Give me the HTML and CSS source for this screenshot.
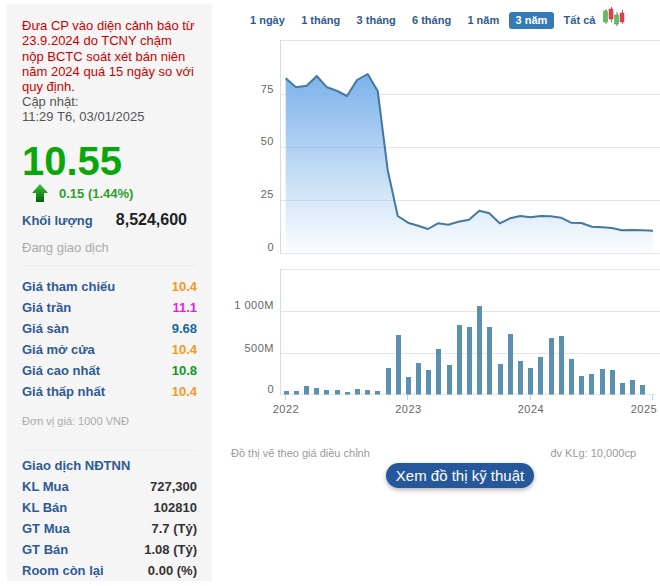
FILE: index.html
```html
<!DOCTYPE html>
<html lang="vi">
<head>
<meta charset="utf-8">
<title>Biểu đồ giá</title>
<link rel="stylesheet" href="styles.css">
</head>
<body>
<div class="page">
  <aside class="side">
    <div class="notice">Đưa CP vào diện cảnh báo từ 23.9.2024 do TCNY chậm nộp BCTC soát xét bán niên năm 2024 quá 15 ngày so với quy định.</div>
    <div class="updated">Cập nhật:<br>11:29 T6, 03/01/2025</div>
    <div class="price">10.55</div>
    <div class="change">
      <svg class="arrow" width="16" height="18" viewBox="0 0 16 18"><defs><linearGradient id="ag" x1="0" y1="0" x2="0" y2="1"><stop offset="0" stop-color="#3fc23f"/><stop offset="1" stop-color="#006400"/></linearGradient></defs><path d="M8 0 L16 9 L12 9 L12 18 L4 18 L4 9 L0 9 Z" fill="url(#ag)"/></svg>
      <span>0.15 (1.44%)</span>
    </div>
    <div class="volume"><span class="label">Khối lượng</span><span class="volume-value">8,524,600</span></div>
    <div class="status">Đang giao dịch</div>
    <div class="rows first-rows">
      <div class="row"><span class="label">Giá tham chiếu</span><span class="orange">10.4</span></div>
      <div class="row"><span class="label">Giá trần</span><span class="magenta">11.1</span></div>
      <div class="row"><span class="label">Giá sàn</span><span class="teal">9.68</span></div>
      <div class="row"><span class="label">Giá mở cửa</span><span class="orange">10.4</span></div>
      <div class="row"><span class="label">Giá cao nhất</span><span class="green">10.8</span></div>
      <div class="row"><span class="label">Giá thấp nhất</span><span class="orange">10.4</span></div>
    </div>
    <div class="unit">Đơn vị giá: 1000 VNĐ</div>
    <div class="rows second-rows">
      <div class="row"><span class="label">Giao dịch NĐTNN</span></div>
      <div class="row"><span class="label">KL Mua</span><span class="dark">727,300</span></div>
      <div class="row"><span class="label">KL Bán</span><span class="dark">102810</span></div>
      <div class="row"><span class="label">GT Mua</span><span class="dark">7.7 (Tỷ)</span></div>
      <div class="row"><span class="label">GT Bán</span><span class="dark">1.08 (Tỷ)</span></div>
      <div class="row"><span class="label">Room còn lại</span><span class="dark">0.00 (%)</span></div>
    </div>
  </aside>
  <main class="main">
    <nav class="tabs">
      <span class="tab">1 ngày</span>
      <span class="tab">1 tháng</span>
      <span class="tab">3 tháng</span>
      <span class="tab">6 tháng</span>
      <span class="tab">1 năm</span>
      <span class="tab active">3 năm</span>
      <span class="tab">Tất cả</span>
      <svg class="candles" width="24" height="20" viewBox="0 0 24 20">
        <g class="wick"><path d="M4 2V17M9.500 0V15M15 5V19M20.500 3V17"/></g>
        <rect class="up" x="1.500" y="4" width="4" height="11"/>
        <rect class="down" x="7" y="2" width="4" height="10"/>
        <rect class="up" x="12.500" y="8" width="4" height="9"/>
        <rect class="down" x="18" y="6" width="4" height="9"/>
      </svg>
    </nav>
    <svg class="chart" width="440" height="384" viewBox="220 32 440 384">
      <defs><linearGradient id="area" x1="0" y1="0" x2="0" y2="1"><stop offset="0" stop-color="#7cb2ea"/><stop offset="1" stop-color="#7cb2ea" stop-opacity="0.02"/></linearGradient></defs>
      <path class="grid" d="M280 40.500H660M280 94.500H660M280 147.500H660M280 200.500H660M280 253.500H660"/>
      <path class="axis" d="M280.500 40V254"/>
      <path class="area" d="M285.700 78.300L296 87.300L306.700 85.700L316.700 76L327 87.300L337.300 91L347 96L357 80L367.700 74L377.700 91L387.700 170L397.700 216L408 222.700L418 225.700L428 229L438 223.300L448.300 224.700L458.300 221.700L469 219.700L479.300 210.700L489.300 213.300L499.700 223.300L510 218.300L520.300 216L530.300 217.300L540.700 216L550.700 216.300L561 217.700L571 222.700L581.300 223L592 226.700L602 227.300L612 228L621.700 230.300L632.300 230L642.700 230.300L653 230.700V253H285.700Z"/>
      <path class="line" d="M285.700 78.300L296 87.300L306.700 85.700L316.700 76L327 87.300L337.300 91L347 96L357 80L367.700 74L377.700 91L387.700 170L397.700 216L408 222.700L418 225.700L428 229L438 223.300L448.300 224.700L458.300 221.700L469 219.700L479.300 210.700L489.300 213.300L499.700 223.300L510 218.300L520.300 216L530.300 217.300L540.700 216L550.700 216.300L561 217.700L571 222.700L581.300 223L592 226.700L602 227.300L612 228L621.700 230.300L632.300 230L642.700 230.300L653 230.700"/>
      <g class="tick-text ylabels">
        <text x="274" y="93">75</text><text x="274" y="145">50</text><text x="274" y="198">25</text><text x="274" y="251">0</text>
        <text x="274" y="309">1 000M</text><text x="274" y="352">500M</text><text x="274" y="393">0</text>
      </g>
      <path class="grid" d="M280 269.500H660M280 311.500H660M280 353.500H660M280 394.500H656"/>
      <path class="axis" d="M280.500 269V395"/>
      <path class="ticks" d="M285.500 395V400M407.500 395V400M530.500 395V400M652.500 395V400"/>
      <g class="bars">
        <rect x="284" y="391" width="5" height="3.500"/><rect x="294" y="391" width="5" height="3.500"/><rect x="304" y="386" width="5" height="8.500"/><rect x="314" y="388" width="5" height="6.500"/><rect x="324" y="390" width="5" height="4.500"/><rect x="335" y="390" width="5" height="4.500"/><rect x="345" y="392" width="5" height="2.500"/><rect x="355" y="389" width="5" height="5.500"/><rect x="365" y="390" width="5" height="4.500"/><rect x="375" y="391" width="5" height="3.500"/><rect x="386" y="368" width="5" height="26.500"/><rect x="396" y="335" width="5" height="59.500"/><rect x="406" y="377" width="5" height="17.500"/><rect x="416" y="363" width="5" height="31.500"/><rect x="426" y="370" width="5" height="24.500"/><rect x="436" y="349" width="5" height="45.500"/><rect x="447" y="365" width="5" height="29.500"/><rect x="457" y="325" width="5" height="69.500"/><rect x="467" y="327" width="5" height="67.500"/><rect x="477" y="306" width="5" height="88.500"/><rect x="487" y="327" width="5" height="67.500"/><rect x="498" y="364" width="5" height="30.500"/><rect x="508" y="334" width="5" height="60.500"/><rect x="518" y="361" width="5" height="33.500"/><rect x="528" y="368" width="5" height="26.500"/><rect x="538" y="357" width="5" height="37.500"/><rect x="549" y="338" width="5" height="56.500"/><rect x="559" y="336" width="5" height="58.500"/><rect x="569" y="359" width="5" height="35.500"/><rect x="579" y="376" width="5" height="18.500"/><rect x="589" y="374" width="5" height="20.500"/><rect x="600" y="369" width="5" height="25.500"/><rect x="610" y="370" width="5" height="24.500"/><rect x="620" y="383" width="5" height="11.500"/><rect x="630" y="380" width="5" height="14.500"/><rect x="640" y="385" width="5" height="9.500"/>
      </g>
      <g class="tick-text xlabels">
        <text x="286" y="413">2022</text><text x="408.500" y="413">2023</text><text x="531" y="413">2024</text><text x="644" y="413">2025</text>
      </g>
    </svg>
    <div class="notes"><span>Đồ thị vẽ theo giá điều chỉnh</span><span>đv KLg: 10,000cp</span></div>
    <div class="action"><a class="button">Xem đồ thị kỹ thuật</a></div>
  </main>
</div>
</body>
</html>
```
FILE: styles.css
```css
html, body { margin: 0; padding: 0; background: #fff; }
body { font-family: "Liberation Sans", Arial, sans-serif; overflow: hidden; }
.page { display: flex; align-items: flex-start; width: 660px; height: 586px; }

.side { box-sizing: border-box; width: 205px; height: 577px; margin: 4px 0 0 7px; padding: 14px 15px 0; background: #f5f5f5; overflow: hidden; }
.notice { font-size: 13px; line-height: 15.3px; color: #c00; }
.updated { font-size: 13px; line-height: 15px; color: #555; }
.price { margin-top: 13.600px; font-size: 40px; line-height: 46px; font-weight: bold; color: #09a709; }
.change { display: flex; align-items: center; gap: 11px; height: 22px; margin: -2px 0 0 10px; font-size: 13px; font-weight: bold; color: #2f9e2f; }
.arrow { display: block; }
.volume { display: flex; justify-content: space-between; align-items: baseline; margin-top: 7px; padding-right: 10px; height: 24px; }
.label { font-size: 13px; font-weight: bold; color: #2f5a94; }
.volume-value { font-size: 16px; font-weight: bold; color: #222; }
.status { margin-top: 4px; padding-bottom: 8px; font-size: 13px; line-height: 18px; color: #aaa; border-bottom: 1px solid #ececec; }
.rows { font-size: 13px; font-weight: bold; }
.first-rows { margin-top: 10px; }
.row { display: flex; justify-content: space-between; align-items: center; height: 21px; }
.orange { color: #f7981d; }
.magenta { color: #e31fe3; }
.teal { color: #17699c; }
.green { color: #0c9a1c; }
.dark { color: #333; }
.unit { margin-top: 11px; padding-bottom: 21px; font-size: 11px; line-height: 16px; color: #aaa; border-bottom: 1px solid #ececec; }
.second-rows { margin-top: 4px; }

.main { flex: 1; min-width: 0; margin-left: 8px; }
.tabs { display: flex; align-items: center; gap: 2.300px; height: 17px; margin: 12px 0 0 23px; }
.tab { padding: 0 7px; font-size: 11px; line-height: 17px; font-weight: bold; color: #2f5a8f; border-radius: 3px; white-space: nowrap; }
.tab.active { background: #337ab7; color: #fff; }
.candles { display: block; margin: -8px 0 0 -3px; }
.wick path { stroke: #777; stroke-width: 1; fill: none; }
.up { fill: #5cc05c; stroke: #3e9a3e; stroke-width: .5; }
.down { fill: #e04050; stroke: #b73040; stroke-width: .5; }

.chart { display: block; margin-top: 3px; }
.grid { stroke: #e2e6ec; stroke-width: 1; fill: none; }
.axis { stroke: #d4dce6; stroke-width: 1; fill: none; }
.ticks { stroke: #c0d0e0; stroke-width: 1; fill: none; }
.area { fill: url(#area); }
.line { stroke: #44799f; stroke-width: 2; fill: none; stroke-linejoin: round; }
.bars rect { fill: #5a91b0; }
.tick-text text { font-family: "Liberation Sans", Arial, sans-serif; font-size: 11px; letter-spacing: .5px; fill: #666; }
.ylabels text { text-anchor: end; }
.xlabels text { text-anchor: middle; }

.notes { display: flex; justify-content: space-between; margin: 30px 24px 0 11px; font-size: 11px; line-height: 14px; color: #999; }
.action { display: flex; justify-content: center; margin: 3px 0 0 40px; }
.button { display: block; width: 148px; height: 25px; border-radius: 13px; background: #25589b; color: #fff; font-size: 15px; line-height: 25px; text-align: center; box-shadow: 0 2px 5px rgba(0,0,0,.3); }
```
